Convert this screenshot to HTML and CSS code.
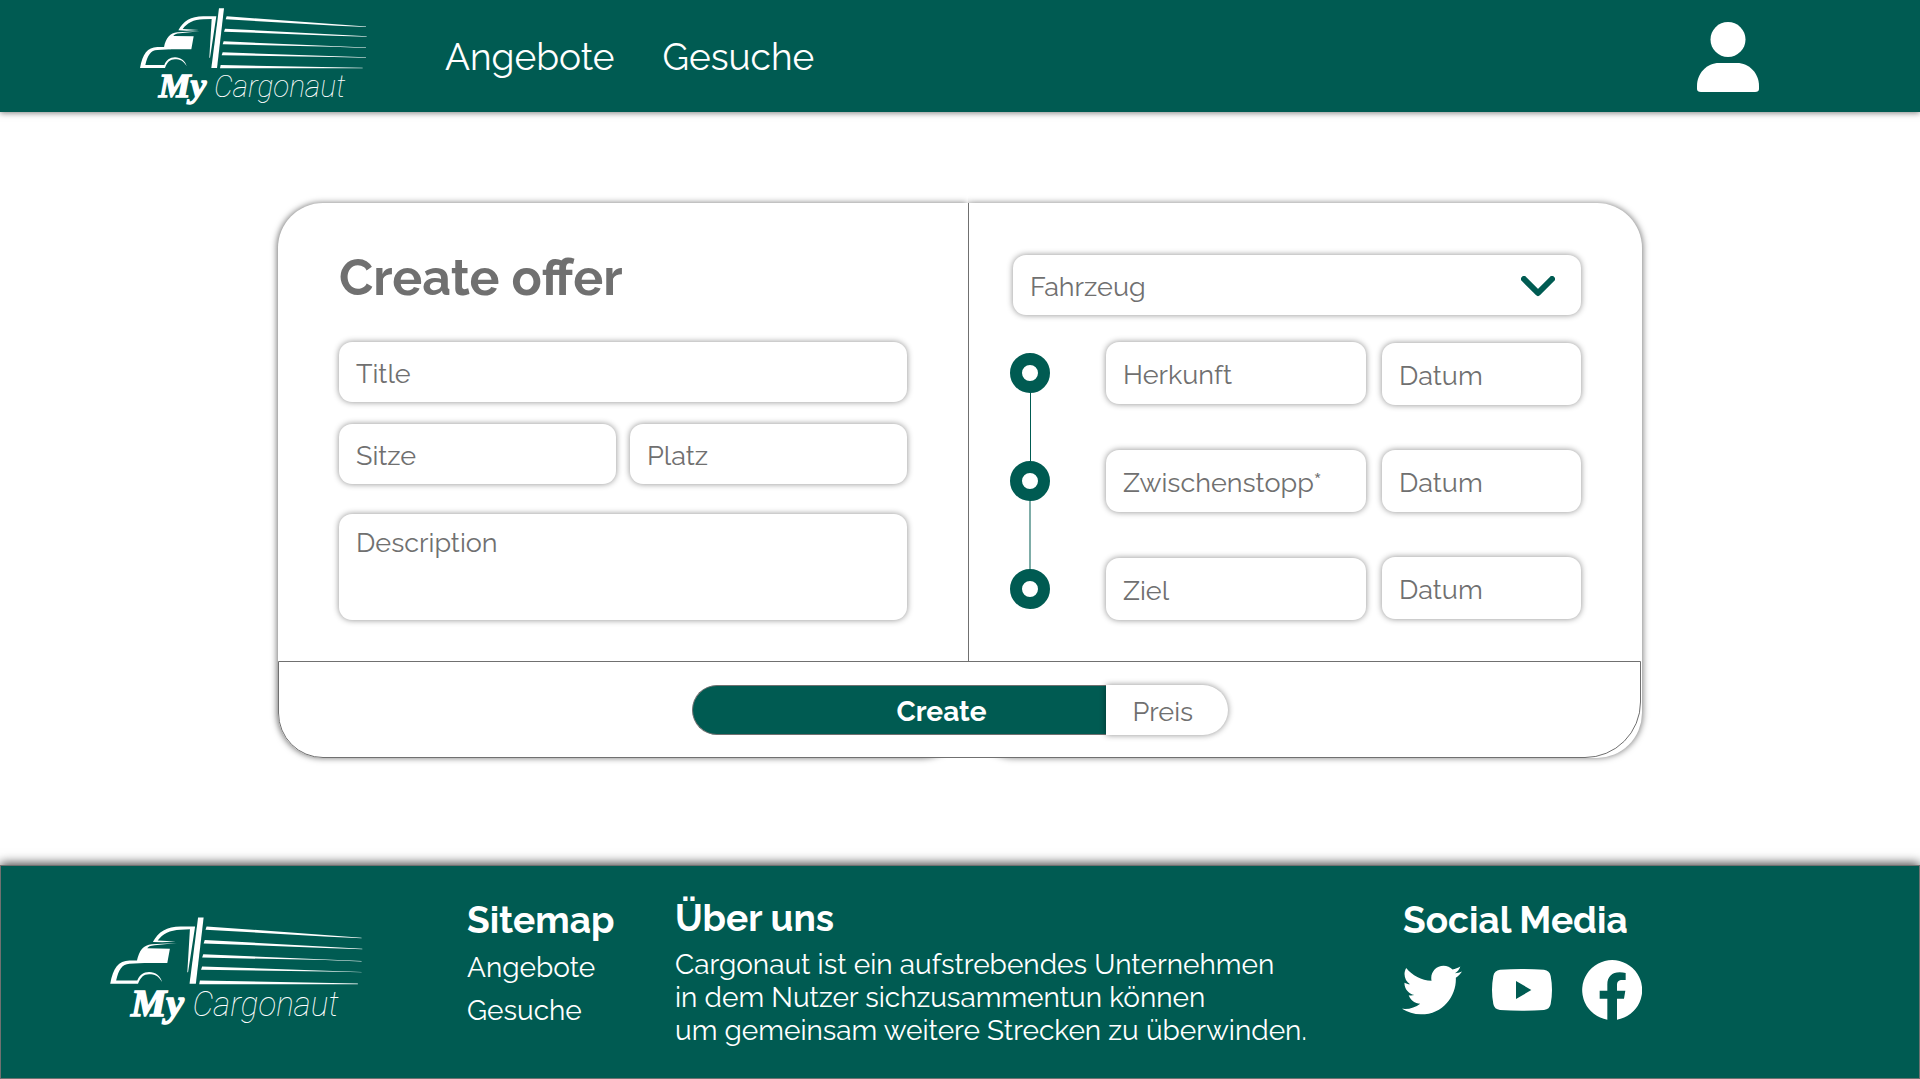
FILE: index.html
```html
<!DOCTYPE html>
<html lang="de">
<head>
<meta charset="utf-8">
<title>My Cargonaut – Create offer</title>
<link rel="stylesheet" href="styles.css">
</head>
<body>
<header class="header">
  <svg class="header-logo" viewBox="60 20 684 294">
    <g id="truck">
      <path d="M297 24H312L291 203H274Z"/>
      <path d="M320 48L738 78.500L738 80L650 76L317 57Z"/>
      <path d="M315 85L740 108L740 109.500L640 106L312 94Z"/>
      <path d="M311 123L738 141.500L738 143L640 139L308 132Z"/>
      <path d="M308 156L738 171L738 172L640 170L305 165Z"/>
      <path d="M302 194L728 202V204H300Z"/>
      <path d="M175 90C190 62 212 48 250 48H289L270 172H268L275 56L250 57C220 58 202 68 188 86L237 89L200 91Z"/>
      <path d="M132 141C138 112 150 98 172 96L240 93L180 99C168 100 162 103 160 107L221 108L214 147H150Z"/>
      <path d="M60 203C68 160 82 141 112 140H150L152 147L112 149C92 150 83 165 76 194H133C138 180 150 171 165 171C182 171 196 182 200 198C190 181 180 177 165 177C150 177 142 185 135 203Z"/>
    </g>
    <text class="logo-my" x="116" y="291" textLength="143" lengthAdjust="spacingAndGlyphs">My</text>
    <text class="logo-name" x="282" y="290" textLength="394" lengthAdjust="spacingAndGlyphs">Cargonaut</text>
  </svg>
  <nav class="nav"><a>Angebote</a><a>Gesuche</a></nav>
  <svg class="user" viewBox="0 0 62 70"><circle cx="31" cy="17.500" r="17.500"/><path d="M0 64C0 51 10 41 22 41H40C52 41 62 51 62 64V67Q62 70 58 70H4Q0 70 0 67Z"/></svg>
</header>

<main class="main">
  <form class="card">
    <section class="panel panel-left">
      <h1 class="title">Create offer</h1>
      <div class="field">Title</div>
      <div class="pair"><div class="field">Sitze</div><div class="field">Platz</div></div>
      <div class="field area">Description</div>
    </section>
    <section class="panel panel-right">
      <div class="field select">Fahrzeug
        <svg class="chevron" viewBox="0 0 34 21"><path d="M3 3L17 17L31 3"/></svg>
      </div>
      <div class="route">
        <div class="track">
          <span class="stop"></span><span class="line"></span><span class="stop"></span><span class="line faint"></span><span class="stop"></span>
        </div>
        <div class="places"><div class="field">Herkunft</div><div class="field">Zwischenstopp*</div><div class="field">Ziel</div></div>
        <div class="dates"><div class="field">Datum</div><div class="field">Datum</div><div class="field">Datum</div></div>
      </div>
    </section>
    <section class="actions">
      <div class="create">Create</div><div class="price">Preis</div>
    </section>
  </form>
</main>

<footer class="footer">
  <svg class="footer-logo" viewBox="60 20 684 294">
    <use href="#truck"/>
    <text class="logo-my" x="116" y="291" textLength="143" lengthAdjust="spacingAndGlyphs">My</text>
    <text class="logo-name" x="282" y="290" textLength="394" lengthAdjust="spacingAndGlyphs">Cargonaut</text>
  </svg>
  <section class="sitemap"><h2>Sitemap</h2><a>Angebote</a><a>Gesuche</a></section>
  <section class="about"><h2>Über uns</h2>
    <p>Cargonaut ist ein aufstrebendes Unternehmen<br>in dem Nutzer sichzusammentun können<br>um gemeinsam weitere Strecken zu überwinden.</p>
  </section>
  <section class="social"><h2>Social Media</h2>
    <div class="icons">
      <svg viewBox="0 0 512 512"><path d="M459.37 151.716c.325 4.548.325 9.097.325 13.645 0 138.72-105.583 298.558-298.558 298.558-59.452 0-114.68-17.219-161.137-47.106 8.447.974 16.568 1.299 25.34 1.299 49.055 0 94.213-16.568 130.274-44.832-46.132-.975-84.792-31.188-98.112-72.772 6.498.974 12.995 1.624 19.818 1.624 9.421 0 18.843-1.300 27.614-3.573-48.081-9.747-84.143-51.980-84.143-102.985v-1.299c13.969 7.797 30.214 12.670 47.431 13.319-28.264-18.843-46.781-51.005-46.781-87.391 0-19.492 5.197-37.360 14.294-52.954 51.655 63.675 129.300 105.258 216.365 109.807-1.624-7.797-2.599-15.918-2.599-24.040 0-57.828 46.782-104.934 104.934-104.934 30.213 0 57.502 12.670 76.670 33.137 23.715-4.548 46.456-13.320 66.599-25.340-7.798 24.366-24.366 44.833-46.132 57.827 21.117-2.273 41.584-8.122 60.426-16.243-14.292 20.791-32.161 39.308-52.628 54.253z"/></svg>
      <svg viewBox="0 0 180 180"><path fill-rule="evenodd" d="M24 29Q90 25 156 29Q173 31 176 48Q184 90 176 132Q173 148 156 150Q90 154 24 150Q7 148 4 132Q-4 90 4 48Q7 31 24 29ZM72 63V117L118 90Z"/></svg>
      <svg viewBox="0 0 180 180"><path d="M76 179A90 90 0 1 1 105 179V116H126L130 92H105V76C105 64 110 60 121 60H131V39Q123 37 113 37C90 37 76 50 76 74V92H53V116H76Z"/></svg>
    </div>
  </section>
</footer>
</body>
</html>
```
FILE: styles.css
```css
* { box-sizing: border-box; }
body { margin: 0; height: 1079px; display: flex; flex-direction: column; background: #fff; color: #707070; font: 27px Raleway, Lato, sans-serif; overflow: hidden; }
h1, h2, p { margin: 0; }
.logo-my { font: italic bold 104px "Liberation Serif", serif; stroke: #fff; stroke-width: 4px; }
.logo-name { font: italic 100 96px Roboto, sans-serif; }

.header { flex: none; height: 112px; display: flex; align-items: center; padding: 0 161px 0 140px; background: #005b52; fill: #fff; color: #fff; box-shadow: 0 1px 6px rgba(0, 0, 0, .5); }
.header-logo { width: 228px; height: 98px; }
.nav { display: flex; gap: 48px; margin-left: 77px; padding-top: 1px; font-size: 37px; }
.user { width: 62px; height: 70px; margin: 2px 0 0 auto; }

.main { flex: 1; padding: 91px 278px 0; }
.card { display: grid; grid-template: 458px 97px / 690px 674px; }
.panel { grid-row: 1 / 3; background: #fff; }
.panel-left { grid-column: 1; padding: 49px 61px 0; border-radius: 45px 0 45px 45px; box-shadow: -1px 0 6px rgba(0, 0, 0, .55); }
.panel-right { grid-column: 2; padding: 52px 61px 0 44px; border-left: 1px solid #707070; border-radius: 0 45px 45px 45px; box-shadow: 1px 0 6px rgba(0, 0, 0, .5); clip-path: inset(-12px -12px -12px 0); }
.title { font-size: 50px; line-height: 52px; height: 90px; }
.field { height: 60px; padding: 3px 17px 0; display: flex; align-items: center; border-radius: 13px; background: #fff; box-shadow: 0 0 6px rgba(0, 0, 0, .45); }
.pair { display: grid; grid-template-columns: 1fr 1fr; gap: 14px; margin: 22px 0 30px; }
.field.area { height: 106px; align-items: flex-start; padding-top: 13px; }
.select { justify-content: space-between; }
.chevron { width: 34px; height: 21px; margin: 0 9px 0 0; fill: none; stroke: #005b52; stroke-width: 6; stroke-linecap: round; stroke-linejoin: round; }
.route { display: flex; margin-top: 27px; }
.track { display: flex; flex-direction: column; align-items: center; width: 40px; margin: 11px 56px 0 -3px; }
.stop { width: 40px; height: 40px; border: 12px solid #005b52; border-radius: 50%; }
.line { width: 1px; height: 68px; background: #005b52; }
.line.faint { width: 2px; opacity: .5; }
.places { width: 260px; display: grid; gap: 46px; align-content: start; }
.dates { width: 199px; margin-left: 16px; }
.places .field, .dates .field { height: 62px; }
.dates .field { margin: 1px 0 45px; }
.actions { grid-row: 2; grid-column: 1 / 3; z-index: 1; display: flex; justify-content: center; align-items: center; margin: 0 1px 0 0; background: #fff; border: 1px solid #707070; border-radius: 0 0 56px 45px; }
.create { width: 414px; height: 50px; display: flex; align-items: center; padding: 4px 0 0 204px; border: 1px solid #707070; border-right: 0; border-radius: 25px 0 0 25px; background: #005b52; color: #fff; font-size: 28px; font-weight: 700; }
.price { width: 122px; height: 50px; padding: 3px 0 0 27px; display: flex; align-items: center; background: #fff; border-radius: 0 25px 25px 0; box-shadow: 0 0 6px rgba(0, 0, 0, .45); }

.footer { flex: none; height: 214px; display: grid; grid-template-columns: 357px 208px 727px 240px; padding-left: 109px; background: #005b52; border: 1px solid #707070; color: #fff; fill: #fff; font-size: 28px; box-shadow: 0 -2px 10px rgba(0, 0, 0, .7); }
.footer-logo { width: 254px; height: 109px; margin-top: 50px; }
.footer h2 { font-size: 37px; line-height: 43px; }
.sitemap { display: flex; flex-direction: column; padding-top: 33px; }
.sitemap a { line-height: 43px; }
.sitemap h2 { margin-bottom: 4px; }
.about { padding-top: 31px; }
.about p { line-height: 33px; margin-top: 8px; }
.social { padding: 33px 0 0 1px; }
.icons { display: flex; gap: 30px; margin: 18px 0 0 -1px; }
.icons svg { width: 60px; height: 60px; }
```
